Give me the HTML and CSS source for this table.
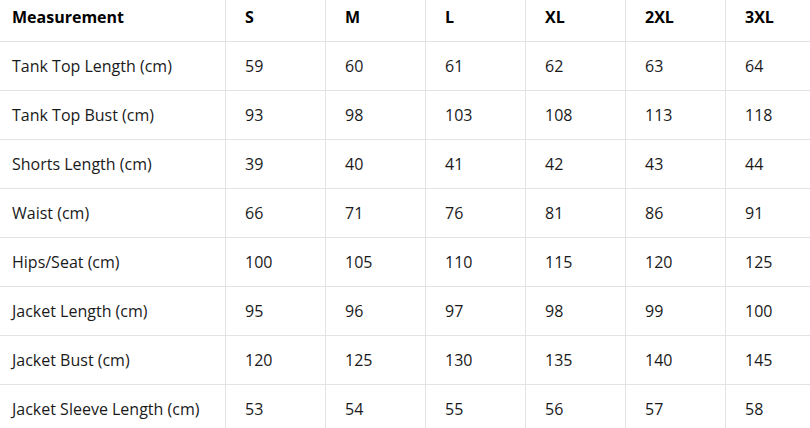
FILE: index.html
```html
<!DOCTYPE html>
<html>
<head>
<meta charset="utf-8">
<link rel="stylesheet" href="styles.css">
</head>
<body>
<table class="size-table">
  <colgroup>
    <col class="col-label"><col class="col-size"><col class="col-size"><col class="col-size"><col class="col-size"><col class="col-size"><col class="col-size">
  </colgroup>
  <thead>
    <tr><th>Measurement</th><th>S</th><th>M</th><th>L</th><th>XL</th><th>2XL</th><th>3XL</th></tr>
  </thead>
  <tbody>
    <tr><td>Tank Top Length (cm)</td><td>59</td><td>60</td><td>61</td><td>62</td><td>63</td><td>64</td></tr>
    <tr><td>Tank Top Bust (cm)</td><td>93</td><td>98</td><td>103</td><td>108</td><td>113</td><td>118</td></tr>
    <tr><td>Shorts Length (cm)</td><td>39</td><td>40</td><td>41</td><td>42</td><td>43</td><td>44</td></tr>
    <tr><td>Waist (cm)</td><td>66</td><td>71</td><td>76</td><td>81</td><td>86</td><td>91</td></tr>
    <tr><td>Hips/Seat (cm)</td><td>100</td><td>105</td><td>110</td><td>115</td><td>120</td><td>125</td></tr>
    <tr><td>Jacket Length (cm)</td><td>95</td><td>96</td><td>97</td><td>98</td><td>99</td><td>100</td></tr>
    <tr><td>Jacket Bust (cm)</td><td>120</td><td>125</td><td>130</td><td>135</td><td>140</td><td>145</td></tr>
    <tr><td>Jacket Sleeve Length (cm)</td><td>53</td><td>54</td><td>55</td><td>56</td><td>57</td><td>58</td></tr>
  </tbody>
</table>
</body>
</html>
```
FILE: styles.css
```css
html, body {
  margin: 0;
  padding: 0;
  background: #ffffff;
  overflow: hidden;
}
body {
  font-family: "Open Sans", "Noto Sans", sans-serif;
  font-size: 16px;
  color: #1a1a1a;
}
.size-table {
  margin: -8px 0 0 -8px;
  border-collapse: collapse;
  table-layout: fixed;
  width: 833px;
}
.col-label { width: 233px; }
.col-size { width: 100px; }
.size-table th,
.size-table td {
  text-align: left;
  padding: 0 18px 0 19px;
  height: 48px;
  border: 1px solid #e3e3e3;
  white-space: nowrap;
}
.size-table th {
  font-weight: 700;
  color: #000;
}
```
